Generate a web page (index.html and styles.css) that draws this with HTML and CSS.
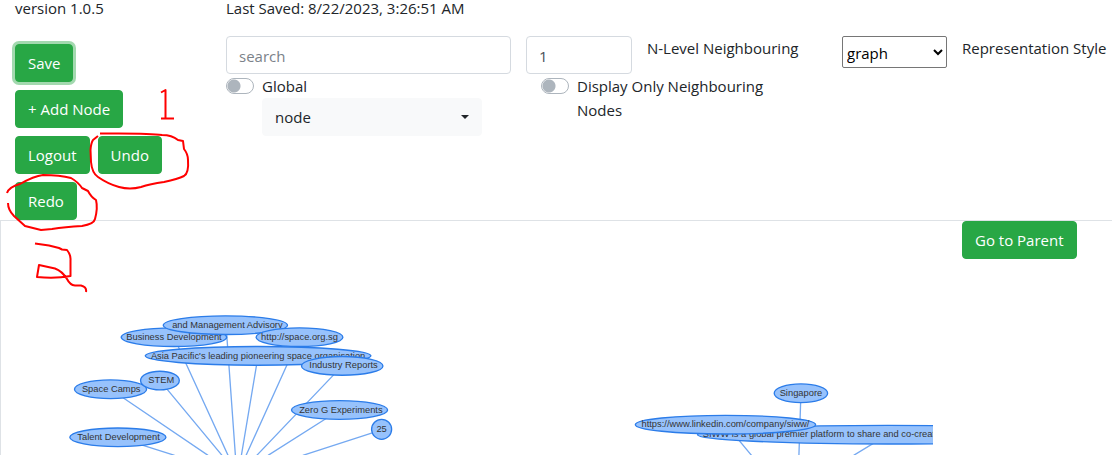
FILE: index.html
```html
<!DOCTYPE html>
<html lang="en">
<head>
  <meta charset="utf-8">
  <meta name="viewport" content="width=device-width, initial-scale=1">
  <title>Graph editor</title>
  <link rel="stylesheet" href="styles.css">
</head>
<body>
  <header class="toolbar">
    <span class="status">version 1.0.5</span>
    <span class="status status-saved">Last Saved: 8/22/2023, 3:26:51 AM</span>

    <div class="actions">
      <div class="action-row"><button type="button" class="btn btn-focused">Save</button></div>
      <div class="action-row"><button type="button" class="btn">+ Add Node</button></div>
      <div class="action-row">
        <button type="button" class="btn">Logout</button>
        <button type="button" class="btn">Undo</button>
      </div>
      <div class="action-row"><button type="button" class="btn">Redo</button></div>
    </div>

    <div class="search">
      <input class="field" type="text" placeholder="search" aria-label="search">
      <div class="switch-row">
        <input class="switch" type="checkbox" role="switch" id="global">
        <label for="global">Global</label>
      </div>
      <div class="picker">
        <select class="picker-select" aria-label="Search type"><option>node</option></select>
      </div>
    </div>

    <div class="neighbours">
      <div class="level-row">
        <input class="field level" type="text" inputmode="numeric" id="level" value="1">
        <label for="level">N-Level Neighbouring</label>
      </div>
      <div class="switch-row switch-row-indented">
        <input class="switch" type="checkbox" role="switch" id="only">
        <label for="only">Display Only Neighbouring Nodes</label>
      </div>
    </div>

    <select class="style-select" id="style"><option>graph</option></select>
    <label class="style-label" for="style">Representation Style</label>
  </header>

  <main class="canvas">
    <svg class="graph" viewBox="2 332 1396 351" role="img" aria-label="Node graph">
      <g class="edges">
        <path d="M177 656L262 683M166 584L312 683M240 571L333 683M261 506L342 683M339 488L353 683M387 534L362 683M449 506L369 683M513 549L385 683M509 615L402 683M572 645L454 683"/>
        <path d="M1200 590L1197 683M1087 636L1126 683M1330 652L1279 683"/>
      </g>
      <g class="nodes">
        <ellipse cx="177" cy="656" rx="72" ry="14"/><text x="178" y="660">Talent Development</text>
        <ellipse cx="166" cy="584" rx="54" ry="14"/><text x="167" y="588">Space Camps</text>
        <ellipse cx="240" cy="571" rx="29" ry="14"/><text x="242" y="575">STEM</text>
        <ellipse cx="261" cy="506" rx="79" ry="14"/><text x="261" y="510">Business Development</text>
        <ellipse cx="338" cy="488" rx="93" ry="14"/><text x="341" y="492">and Management Advisory</text>
        <ellipse cx="449" cy="506" rx="65" ry="14"/><text x="449" y="510">http://space.org.sg</text>
        <ellipse cx="387" cy="534" rx="169" ry="14"/><text x="387" y="538">Asia Pacific's leading pioneering space organisation</text>
        <ellipse cx="513" cy="549" rx="61" ry="14"/><text x="515" y="552">Industry Reports</text>
        <ellipse cx="509" cy="615" rx="72" ry="14"/><text x="511" y="619">Zero G Experiments</text>
        <circle cx="572" cy="644" r="15"/><text x="572" y="648">25</text>
        <ellipse cx="1200" cy="590" rx="40" ry="14"/><text x="1200" y="594">Singapore</text>
        <ellipse cx="1330" cy="652" rx="285" ry="14"/><text class="from-left" x="1053" y="656">SIWW is a global premier platform to share and co-create</text>
        <ellipse cx="1087" cy="637" rx="135" ry="14"/><text x="1087" y="641">https://www.linkedin.com/company/siww/</text>
      </g>
    </svg>
    <button type="button" class="btn parent">Go to Parent</button>
  </main>

  <svg class="markup" width="200" height="300" viewBox="0 0 200 300" aria-hidden="true">
    <path d="M161 92.500L165.500 90V118.500M161 118.500H174"/>
    <path d="M98 136L93 140Q91 143 90.500 150L91 162Q92 173 98 177Q108 184 119 187Q130 190 141 187Q150 184 164 182Q178 179 184 176Q189 173 188 160Q188 154 184 149L183 141L178 140Q172 135 162 135Q150 133 100 133.500"/>
    <path d="M7 193Q9 187 20 184Q34 176 43 175Q60 175 71 178Q78 182 82 188L88 191Q91 197 96 200Q98 208 95 219Q94 224 82 226Q65 227 52 229L41 230L25 226L14 216Q8 210 8 203"/>
    <path d="M35 243.500L49 245.500L59 248L62 249.500L67 250Q71 255 70.500 260V276Q55 279 37 277L39 265L55 268.500Q62 271 67 279Q70 285 75 285.500H81Q87 287 86 292"/>
  </svg>
</body>
</html>
```

FILE: styles.css
```css
* { box-sizing: border-box; }

body {
  margin: 0;
  background: #fff;
  color: #212529;
  font: 15px/24px "Open Sans", "Noto Sans", sans-serif;
}

button, input, select { font: inherit; }

.toolbar {
  display: grid;
  grid-template-columns: 211fr 300fr 316fr 120fr 150fr;
  row-gap: 20px;
  align-items: start;
  padding-left: 15px;
}

.status { line-height: 16px; }
.status-saved { grid-column: 2 / -1; }

.actions {
  display: flex;
  flex-direction: column;
  gap: 8px;
  padding-top: 8px;
}

.action-row { display: flex; gap: 8px; }

.btn {
  height: 38px;
  padding: 0 12px;
  border: 1px solid #28a745;
  border-radius: 4px;
  background: #28a745;
  color: #fff;
  white-space: nowrap;
}

.btn-focused { box-shadow: 0 0 0 3px #a3d9af; }

.search { padding-right: 15px; }

.field {
  display: block;
  width: 100%;
  height: 38px;
  padding: 2px 12px 0;
  border: 1px solid #d5dae0;
  border-radius: 4px;
  background: #fff;
  color: #495057;
}

.field::placeholder { color: #7b8289; opacity: 1; }

.switch-row {
  display: flex;
  align-items: flex-start;
  gap: 8px;
}

.switch-row-indented { padding: 0 36px 0 15px; }

.switch {
  flex: none;
  width: 28px;
  height: 16px;
  margin: 4px 0 0;
  border: 1px solid #adb5bd;
  border-radius: 8px;
  appearance: none;
  background: radial-gradient(circle at 7px 7px, #adb5bd 6px, #fff 7px);
}

.picker {
  position: relative;
  width: 220px;
  margin-left: 36px;
}

.picker::after {
  content: "";
  position: absolute;
  top: 17px;
  right: 13px;
  border: 4px solid transparent;
  border-top-color: #212529;
  border-bottom: 0;
  pointer-events: none;
}

.picker-select {
  display: block;
  width: 100%;
  height: 38px;
  padding: 0 12px;
  border: 1px solid #f8f9fa;
  border-radius: 4px;
  appearance: none;
  background: #f8f9fa;
  color: #212529;
}

.level-row { display: flex; gap: 15px; }
.level { width: 106px; }

.style-select {
  width: 105px;
  height: 32px;
  padding-top: 2px;
  border: 1px solid #767676;
  border-radius: 2px;
  background: #fff;
  color: #000;
}

.style-label { white-space: nowrap; }

.canvas {
  display: grid;
  grid-template-columns: 961fr 150fr;
  align-items: start;
  border-top: 1px solid #dee2e6;
  border-left: 1px solid #dee2e6;
}

.graph {
  display: block;
  width: 97%;
}

.parent { justify-self: start; }

.edges {
  fill: none;
  stroke: #75a9f1;
  stroke-width: 2;
}

.nodes ellipse, .nodes circle {
  fill: #97c2fc;
  stroke: #2b7ce9;
  stroke-width: 2;
}

.nodes text {
  fill: #343434;
  font: 14px "Liberation Sans", Arial, sans-serif;
  text-anchor: middle;
}

.nodes .from-left { text-anchor: start; }

.markup {
  position: absolute;
  top: 0;
  left: 0;
  fill: none;
  stroke: #f00;
  stroke-width: 2;
  stroke-linejoin: round;
  pointer-events: none;
}
```
